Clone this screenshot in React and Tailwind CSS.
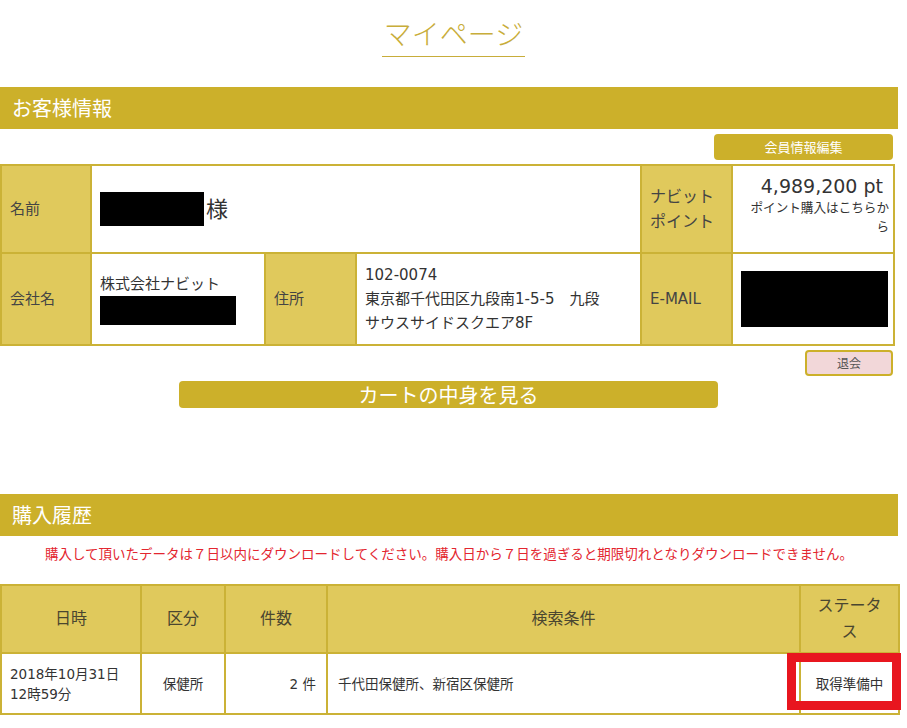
import React from "react";

const FONT = { fontFamily: '"DejaVu Sans", "Noto Sans CJK JP", sans-serif' };
const HEAD_FONT = { fontFamily: '"Noto Sans CJK JP", sans-serif' };

function SectionBar({ children }) {
  return (
    <div
      className="flex h-[42px] w-[898px] items-center bg-[#ccb02a] pl-[12px] text-[20px] leading-none text-white"
      style={HEAD_FONT}
    >
      {children}
    </div>
  );
}

function Label({ children, className = "" }) {
  return (
    <td className={`border-2 border-[#cbb236] bg-[#e0c95c] px-[8px] text-[15px] text-[#444] ${className}`}>
      {children}
    </td>
  );
}

function Cell({ children, className = "", colSpan }) {
  return (
    <td colSpan={colSpan} className={`border-2 border-[#cbb236] bg-white px-[8px] text-[#333] ${className}`}>
      {children}
    </td>
  );
}

export default function App() {
  return (
    <div className="relative w-[907px] bg-white pb-[20px]" style={FONT}>
      <div className="flex justify-center pt-[16px]" style={HEAD_FONT}>
        <div className="border-b border-[#c8ad3a] px-[2px] pb-[6px] text-[28px] font-light leading-[34px] text-[#c8ad3a]">
          マイページ
        </div>
      </div>

      <div className="mt-[30px]">
        <SectionBar>お客様情報</SectionBar>
      </div>

      <div className="flex w-[893px] justify-end pt-[5px]">
        <button
          type="button"
          className="h-[26px] w-[179px] rounded-[4px] bg-[#ccb02a] text-[13px] text-white"
          style={HEAD_FONT}
        >
          会員情報編集
        </button>
      </div>

      <table className="mt-[4px] w-[893px] table-fixed border-collapse">
        <colgroup>
          <col className="w-[90px]" />
          <col className="w-[174px]" />
          <col className="w-[91px]" />
          <col className="w-[285px]" />
          <col className="w-[91px]" />
          <col className="w-[162px]" />
        </colgroup>
        <tbody>
          <tr className="h-[88px]">
            <Label>名前</Label>
            <Cell colSpan={3}>
              <div className="flex items-center">
                <span className="inline-block h-[34px] w-[104px] bg-black" />
                <span className="ml-[2px] text-[22px]">様</span>
              </div>
            </Cell>
            <Label className="text-[16px] leading-[25px]">
              ナビット
              <br />
              ポイント
            </Label>
            <Cell className="pr-[4px] text-right align-top">
              <div className="pt-[8px] pr-[6px] text-[19px] leading-[24px]">4,989,200 pt</div>
              <div className="text-[12.6px] leading-[19px]">ポイント購入はこちらから</div>
            </Cell>
          </tr>
          <tr className="h-[92px]">
            <Label>会社名</Label>
            <Cell>
              <div className="text-[15px] leading-[20px]">株式会社ナビット</div>
              <div className="mt-[2px] h-[29px] w-[136px] bg-black" />
            </Cell>
            <Label>住所</Label>
            <Cell className="text-[15px] leading-[24px]">
              102-0074
              <br />
              東京都千代田区九段南1-5-5　九段
              <br />
              サウスサイドスクエア8F
            </Cell>
            <Label>E-MAIL</Label>
            <Cell>
              <div className="h-[56px] w-[147px] bg-black" />
            </Cell>
          </tr>
        </tbody>
      </table>

      <div className="flex w-[893px] justify-end pt-[4px]">
        <button
          type="button"
          className="h-[26px] w-[88px] rounded-[4px] border-2 border-[#ccb02a] bg-[#f2d7d9] text-[12px] text-[#555]"
          style={HEAD_FONT}
        >
          退会
        </button>
      </div>

      <div className="mt-[5px] pl-[179px]">
        <button
          type="button"
          className="flex h-[27px] w-[539px] items-center justify-center rounded-[4px] bg-[#ccb02a] text-[20px] leading-none text-white"
          style={HEAD_FONT}
        >
          カートの中身を見る
        </button>
      </div>

      <div className="mt-[86px]">
        <SectionBar>購入履歴</SectionBar>
      </div>

      <p className="w-[898px] pt-[9px] text-center text-[13.5px] leading-[18px] text-[#e3262f]">
        購入して頂いたデータは７日以内にダウンロードしてください。購入日から７日を過ぎると期限切れとなりダウンロードできません。
      </p>

      <table className="mt-[21px] w-[898px] table-fixed border-collapse">
        <colgroup>
          <col className="w-[140px]" />
          <col className="w-[84px]" />
          <col className="w-[102px]" />
          <col className="w-[473px]" />
          <col className="w-[99px]" />
        </colgroup>
        <thead>
          <tr className="h-[68px] text-[16px] leading-[26px] text-[#4a4630]">
            <th className="border-2 border-[#cbb236] bg-[#e0c95c] font-normal">日時</th>
            <th className="border-2 border-[#cbb236] bg-[#e0c95c] font-normal">区分</th>
            <th className="border-2 border-[#cbb236] bg-[#e0c95c] font-normal">件数</th>
            <th className="border-2 border-[#cbb236] bg-[#e0c95c] font-normal">検索条件</th>
            <th className="border-2 border-[#cbb236] bg-[#e0c95c] px-[10px] font-normal">ステータス</th>
          </tr>
        </thead>
        <tbody>
          <tr className="h-[61px] text-[13.5px] leading-[20px] text-[#333]">
            <td className="border-2 border-[#cbb236] px-[8px]">
              2018年10月31日
              <br />
              12時59分
            </td>
            <td className="border-2 border-[#cbb236] text-center">保健所</td>
            <td className="border-2 border-[#cbb236] pr-[10px] text-right">2 件</td>
            <td className="border-2 border-[#cbb236] px-[10px]">千代田保健所、新宿区保健所</td>
            <td className="relative border-2 border-[#cbb236] text-center">
              <span className="relative z-10">取得準備中</span>
              <div className="absolute left-[-14px] top-[-1px] h-[57px] w-[114px] border-[9px] border-[#e8161f]" />
            </td>
          </tr>
        </tbody>
      </table>
    </div>
  );
}
